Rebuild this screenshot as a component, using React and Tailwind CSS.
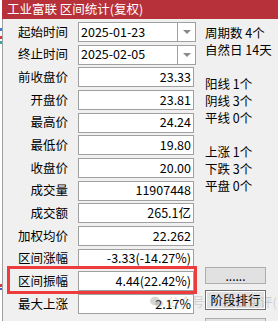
import React from "react";

const FONT = { fontFamily: '"Noto Sans CJK SC", "Noto Sans", sans-serif' };

const rows = [
  ["前收盘价", "23.33"],
  ["开盘价", "23.81"],
  ["最高价", "24.24"],
  ["最低价", "19.80"],
  ["收盘价", "20.00"],
  ["成交量", "11907448"],
  ["成交额", "265.1亿"],
  ["加权均价", "22.262"],
  ["区间涨幅", "-3.33(-14.27%)"],
  ["区间振幅", "4.44(22.42%)"],
  ["最大上涨", "2.17%"],
];

const side = [
  "周期数 4个",
  "自然日 14天",
  "",
  "阳线 1个",
  "阴线 3个",
  "平线 0个",
  "",
  "上涨 1个",
  "下跌 3个",
  "平盘 0个",
];

function Combo({ value }) {
  return (
    <div className="flex h-[20px] w-[118px] shrink-0 border border-[#a0a0a0] bg-white">
      <div className="flex flex-1 items-center pl-[2px] text-[12.5px] leading-none text-black">
        {value}
      </div>
      <div className="flex w-[18px] items-center justify-center border-l border-[#a0a0a0]">
        <svg width="8" height="4" viewBox="0 0 8 4">
          <path d="M0 0H8L4 4Z" fill="#8a8a8a" />
        </svg>
      </div>
    </div>
  );
}

function Label({ children }) {
  return (
    <div className="w-[65px] shrink-0 text-right text-[12.5px] leading-none text-black">
      {children}
    </div>
  );
}

export default function App() {
  return (
    <div
      className="relative flex h-[321px] w-[278px] overflow-hidden bg-white"
      style={FONT}
    >
      <div className="flex w-[2px] shrink-0 flex-col bg-white">
        <div className="mt-[28px] h-[3px] w-[2px] shrink-0 bg-[#3a7bd5]" />
        <div className="mt-[5px] h-[3px] w-[2px] shrink-0 bg-[#d23c3c]" />
        <div className="mt-[2px] h-[3px] w-[2px] shrink-0 bg-[#3aa8a0]" />
        <div className="mt-[240px] h-[3px] w-[2px] shrink-0 bg-[#d23c3c]" />
        <div className="mt-[1px] h-[2px] w-[2px] shrink-0 bg-[#4a5bd0]" />
      </div>
      <div className="flex h-[321px] flex-1 flex-col overflow-hidden">
        <div className="flex h-[19px] shrink-0 items-center bg-[#b7313a] pl-[5px] text-[12.5px] leading-none text-white">
          工业富联 区间统计(复权)
        </div>
        <div className="flex min-h-0 flex-1 overflow-hidden border-l border-[#a0a0a0] bg-[#f0f0f0]">
          <div className="flex shrink-0 flex-col gap-[2.67px] pt-[3px]">
            <div className="flex h-[20px] shrink-0 items-center gap-[10px]">
              <Label>起始时间</Label>
              <Combo value="2025-01-23" />
            </div>
            <div className="flex h-[20px] shrink-0 items-center gap-[10px]">
              <Label>终止时间</Label>
              <Combo value="2025-02-05" />
            </div>
            {rows.map(([k, v]) => (
              <div key={k} className="flex h-[20px] shrink-0 items-center gap-[10px]">
                <Label>{k}</Label>
                <div className="flex h-[20px] w-[116px] shrink-0 items-center justify-end border border-[#a0a0a0] bg-white pr-[2px] text-[12.5px] leading-none text-black">
                  {v}
                </div>
              </div>
            ))}
          </div>
          <div className="flex flex-1 flex-col pl-[9px]">
            <div className="flex shrink-0 flex-col pt-[4.5px]">
              {side.map((s, i) => (
                <div
                  key={i}
                  className="h-[17px] shrink-0 whitespace-nowrap text-[12.5px] leading-[17px] text-black"
                >
                  {s}
                </div>
              ))}
            </div>
            <div className="mt-[73.5px] flex shrink-0 flex-col items-start gap-[6px]">
              <div className="flex h-[17px] w-[61px] shrink-0 items-end justify-center border border-[#adadad] bg-[#e1e1e1] pb-[1px] text-[12px] leading-none text-black">
                ......
              </div>
              <div className="flex h-[20px] w-[61px] shrink-0 items-center justify-center border border-[#707070] bg-[#e1e1e1] text-[12.5px] leading-none text-black shadow-[inset_0_0_0_1px_#ffffff]">
                阶段排行
              </div>
              <div className="mt-[2px] h-[20px] w-[61px] shrink-0 border border-[#adadad] bg-[#e1e1e1]" />
            </div>
          </div>
        </div>
      </div>

      <div className="pointer-events-none absolute left-[7px] top-[266px] h-[28px] w-[190px] border-[3px] border-[#ee3b3b]" />

      <div className="pointer-events-none absolute left-[150px] top-[296px] flex items-center gap-[4px] text-[12.5px] leading-none text-[rgba(140,140,140,0.35)]">
        <svg width="13" height="12" viewBox="0 0 13 12">
          <ellipse cx="5" cy="5" rx="5" ry="4.2" fill="rgba(140,140,140,0.35)" />
          <ellipse cx="9" cy="7.5" rx="4" ry="3.4" fill="rgba(140,140,140,0.3)" />
        </svg>
        <span>公众号 · 白白讲评(</span>
      </div>
    </div>
  );
}
